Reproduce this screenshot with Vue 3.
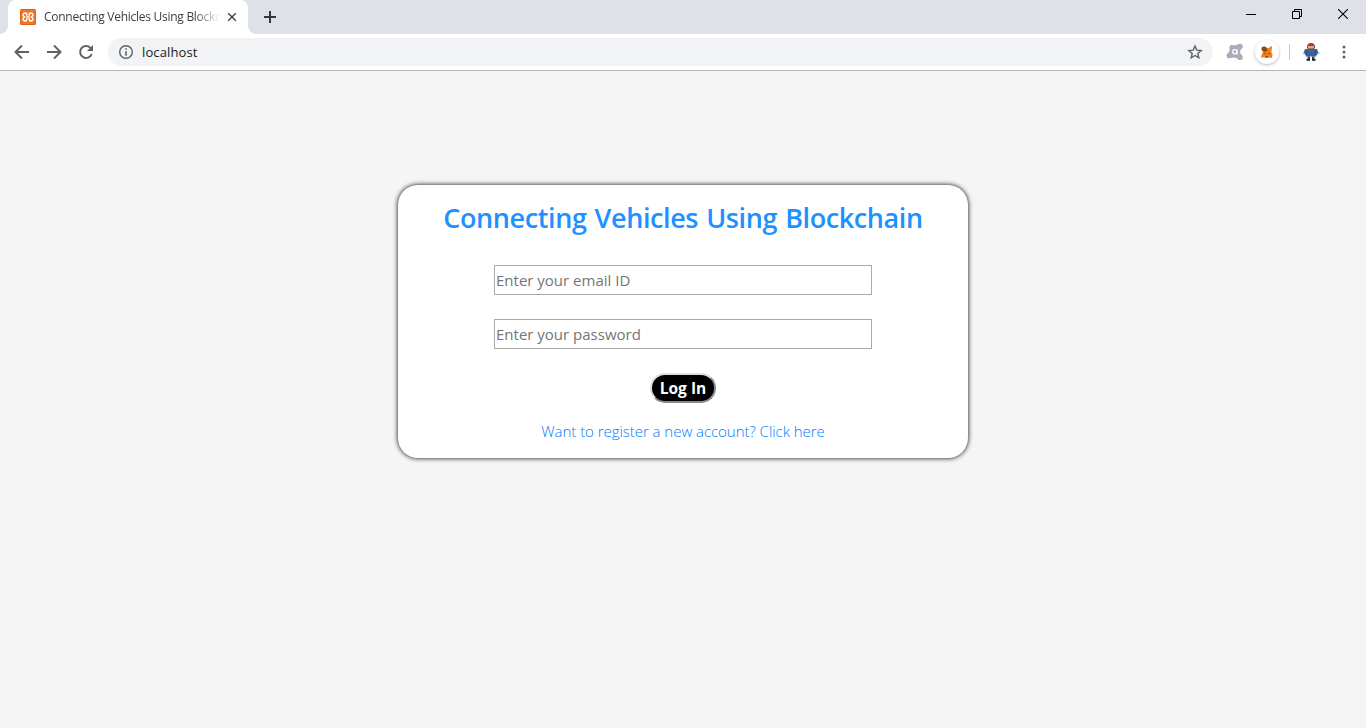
<script setup>
import { ref } from 'vue'

const title = 'Connecting Vehicles Using Blockchain'
const email = ref('')
const password = ref('')
</script>

<template>
  <div class="browser">
    <header class="tabs">
      <div class="tab">
        <svg class="favicon" width="16" height="16" viewBox="0 0 16 16">
          <rect width="16" height="16" rx="1.5" fill="#d9641e" />
          <rect x="1" y="1" width="14" height="14" rx="1" fill="#ed7627" />
          <path d="M6.800 6.700V5.500A1.500 1.400 0 0 0 5.400 4.100H5A1.900 1.800 0 0 0 3.700 7.200L4.600 8l-.9.8A1.900 1.800 0 0 0 5 11.900h.4A1.500 1.400 0 0 0 6.800 10.500V9.300M9.200 6.700V5.500a1.500 1.400 0 0 1 1.400-1.400h.4a1.900 1.800 0 0 1 1.300 3.100l-.9.8.9.8a1.900 1.800 0 0 1-1.300 3.100h-.4a1.500 1.400 0 0 1-1.400-1.400V9.300M6.200 8h3.600" fill="none" stroke="#fff" stroke-width="1.500" />
        </svg>
        <span class="tab-title">{{ title }}</span>
        <svg class="tab-close" width="10" height="10" viewBox="0 0 10 10"><path d="M1.200 1.200l7.600 7.600M8.800 1.200L1.200 8.800" stroke="#45494d" stroke-width="1.500" /></svg>
      </div>
      <svg class="new-tab" width="12" height="12" viewBox="0 0 12 12"><path d="M6 0v12M0 6h12" stroke="#36393d" stroke-width="2" /></svg>
      <div class="window-controls">
        <svg width="10" height="10" viewBox="0 0 10 10"><path d="M0 5.500h10" stroke="#000" /></svg>
        <svg width="10" height="10" viewBox="0 0 10 10" fill="none" stroke="#000"><path d="M.5 2.500h7v7h-7zM2.500 2.500v-2h7v7h-2" /></svg>
        <svg width="10" height="10" viewBox="0 0 10 10"><path d="M0 0l10 10M10 0L0 10" stroke="#000" stroke-width="1.100" /></svg>
      </div>
    </header>

    <nav class="toolbar">
      <svg class="nav-icon" width="20" height="20" viewBox="0 0 20 20"><path d="M17 10H4M10 3.500L3.500 10l6.500 6.500" /></svg>
      <svg class="nav-icon" width="20" height="20" viewBox="0 0 20 20"><path d="M3 10h13M10 3.500l6.500 6.500-6.500 6.500" /></svg>
      <svg class="nav-icon" width="20" height="20" viewBox="0 0 20 20"><path d="M15.700 12.200A6 6 0 1 1 14.300 5.700L16 7.400" /><path d="M17 3v6h-6z" class="solid" /></svg>
      <div class="address">
        <svg width="16" height="16" viewBox="0 0 16 16"><circle cx="8" cy="8" r="6.300" fill="none" stroke="#5f6368" stroke-width="1.400" /><path d="M8 4.200v1.600M8 7.200v4.600" stroke="#5f6368" stroke-width="1.600" /></svg>
        <span class="url">localhost</span>
        <svg class="star" width="16" height="16" viewBox="0 0 16 16"><path d="M8 2l1.750 4.100 4.450.4-3.380 2.950 1 4.350L8 11.500l-3.820 2.300 1-4.350L1.800 6.500l4.450-.4z" fill="none" stroke="#5f6368" stroke-width="1.400" /></svg>
      </div>
      <svg class="avast" width="18" height="18" viewBox="0 0 18 18">
        <g fill="#acabb9"><circle cx="14" cy="3.500" r="2.700" /><circle cx="14" cy="14.400" r="2.700" /><circle cx="3" cy="12.800" r="2.500" /><circle cx="5.500" cy="4" r="2" />
        <path d="M5 2c3 .5 5 .4 8-1l2.500 4.500c-2 2-2 4.800.5 7l-3 4.500c-2-2.500-5-3-9.800-1.700L1 11c2-1.500 3-3.500 2.500-6.500z" /></g>
        <circle cx="8.800" cy="8.800" r="2.100" fill="none" stroke="#fff" stroke-width="1.300" /><path d="M11 6.500v5" stroke="#fff" stroke-width="1.300" />
      </svg>
      <div class="fox">
        <svg width="14" height="14" viewBox="0 0 14 14">
          <path d="M2 2l3-.3 3 1.800L11.700 1l.3 1.800-.7 4.200 1.200 3-.7 3-3.300-.5-2.200.7-2.800-.9L1.500 13l-.3-2L3 7 1.600 4.500z" fill="#ee7c18" />
          <path d="M2 2l3-.4 2.500 2L7 5.700 4.500 7 1.500 5z" fill="#814b24" /><path d="M8 3.500l3.700-2.300-.5 3.600-2 .4z" fill="#f28a1d" />
          <path d="M4.500 8.500l1.300.3M8.500 8.600l1.500-.3M6 11.500h2" stroke="#743c12" />
        </svg>
      </div>
      <span class="divider"></span>
      <svg class="avatar" width="18" height="20" viewBox="0 0 18 20">
        <path d="M5 5c0-5.500 8-5.500 8 0v1H5z" fill="#46506a" /><path d="M6 3.500c.5-3.500 5.500-3.500 6 0z" fill="#e5262b" />
        <path d="M6 4h6v3H6z" fill="#e6ad86" /><path d="M5.500 6l3.500.6 3.500-.6v1.500h-7z" fill="#86502c" />
        <path d="M3 7h12l1.700 4.500-2 1-.7 2H4l-.7-2-2-1z" fill="#3d619b" />
        <path d="M4.500 9v4M13.500 9v4" stroke="#2c4878" /><path d="M.8 10.500l2 .8-.5 1.500-1.500-.7zM15.500 11l2-1 .5 1.200-1.900 1.500z" fill="#d8c4b7" />
        <path d="M5.500 14.500H8V17H5.500zM10 14.500h2.500V17H10z" fill="#384051" /><path d="M4.500 17H8v1.800H4.500zM10 17h3.500v1.800H10z" fill="#171d29" />
      </svg>
      <svg class="menu" width="4" height="14" viewBox="0 0 4 14" fill="#5f6368"><circle cx="2" cy="2" r="1.500" /><circle cx="2" cy="7" r="1.500" /><circle cx="2" cy="12" r="1.500" /></svg>
    </nav>

    <main class="page">
      <form class="card" @submit.prevent>
        <h1>{{ title }}</h1>
        <input v-model="email" type="email" placeholder="Enter your email ID" />
        <input v-model="password" type="password" placeholder="Enter your password" />
        <button type="submit">Log In</button>
        <a href="#">Want to register a new account? Click here</a>
      </form>
    </main>
  </div>
</template>

<style>
body { margin: 0; overflow: hidden; }
</style>

<style scoped>
.browser { width: 100%; height: 100vh; display: flex; flex-direction: column; font-family: "Open Sans", "Noto Sans", sans-serif; }
.tabs { height: 34px; flex: none; background: #dee1e6; display: flex; align-items: flex-start; }
.tab { position: relative; box-sizing: border-box; width: 240px; height: 34px; margin-left: 8px; padding: 0 11px 0 12px; background: #fff; border-radius: 8px 8px 0 0; display: flex; align-items: center; }
.tab::before, .tab::after { content: ""; position: absolute; bottom: 0; width: 8px; height: 8px; }
.tab::before { left: -8px; background: radial-gradient(circle at 0 0, transparent 7.5px, #fff 8px); }
.tab::after { right: -8px; background: radial-gradient(circle at 100% 0, transparent 7.5px, #fff 8px); }
.favicon { flex: none; }
.tab-title { width: 176px; margin-left: 8px; overflow: hidden; white-space: nowrap; font-size: 12px; line-height: 18px; color: #3c4043; letter-spacing: -.27px; -webkit-mask-image: linear-gradient(to right, #000 150px, transparent 176px); mask-image: linear-gradient(to right, #000 150px, transparent 176px); }
.tab-close { flex: none; margin-left: 7px; }
.new-tab { margin: 11px 0 0 16px; }
.window-controls { margin: 9px 18px 0 auto; display: flex; gap: 36px; }
.toolbar { height: 36px; flex: none; border-bottom: 1px solid #b5b4b6; background: #fff; display: flex; align-items: center; padding: 0 20px 0 12px; }
.nav-icon { flex: none; margin-right: 12px; fill: none; stroke: #5f6368; stroke-width: 2; }
.nav-icon .solid { fill: #5f6368; stroke: none; }
.address { width: 1105px; height: 28px; box-sizing: border-box; padding: 0 10px; border-radius: 14px; background: #f1f3f4; display: flex; align-items: center; }
.url { margin-left: 8px; font-size: 13px; letter-spacing: .13px; color: #202124; }
.star { margin-left: auto; }
.avast { margin-left: 13px; }
.fox { width: 24px; height: 24px; margin-left: 11px; border-radius: 50%; display: flex; align-items: center; justify-content: center; box-shadow: 0 1px 3px #8889; background: #fff; }
.divider { width: 1px; height: 16px; margin-left: 10px; background: #c8cacc; }
.avatar { margin-left: 12px; }
.menu { margin-left: auto; }
.page { flex: 1; background: #f5f5f5; display: flex; align-items: flex-start; justify-content: center; padding-top: 114px; }
.card { width: 570px; height: 273px; background: #fff; border-radius: 20px; box-shadow: 0 0 5px #000; display: flex; flex-direction: column; align-items: center; }
h1 { margin: 13px 0 27px; font-size: 27px; line-height: 40px; font-weight: 600; color: #1e90ff; letter-spacing: -.4px; word-spacing: 1.5px; white-space: nowrap; }
input { width: 378px; height: 30px; box-sizing: border-box; padding: 1px; margin: 0 0 24px; border: 1px solid #a9a9a9; border-radius: 0; background: #fff; font: 15px "Open Sans", "Noto Sans", sans-serif; outline: 0; }
input::placeholder { color: #757575; opacity: 1; }
button { width: 66px; height: 30px; box-sizing: border-box; padding: 0; border: 2px outset #ddd; border-radius: 15px; background: #000; color: #fff; font: 700 15.5px/26px "Open Sans", "Noto Sans", sans-serif; letter-spacing: 0; white-space: nowrap; }
a { margin-top: 16px; color: #007bff; font-size: 15px; line-height: 24px; font-weight: 300; letter-spacing: -.04px; text-decoration: none; white-space: nowrap; }
</style>
